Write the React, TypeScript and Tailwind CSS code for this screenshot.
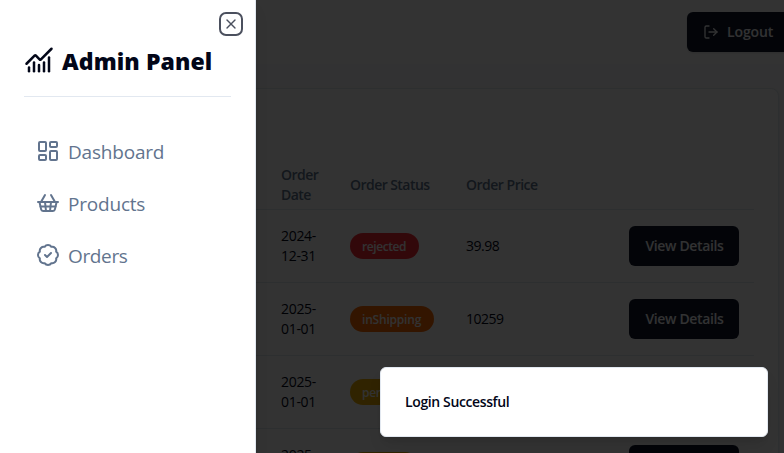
import { BadgeCheck, ChartNoAxesCombined, LayoutDashboard, LogOut, ShoppingBasket, X } from "lucide-react";

const orders = [
  { date: ["2024-", "12-31"], status: "rejected", color: "w-[69px] bg-red-500 tracking-[-0.42px]", price: "39.98" },
  { date: ["2025-", "01-01"], status: "inShipping", color: "w-[84px] bg-orange-500 tracking-[-0.2px]", price: "10259" },
  { date: ["2025-", "01-01"], status: "pending", color: "w-[68px] bg-yellow-500 tracking-[-0.3px]", price: "" },
  { date: ["2025-", "01-01"], status: "pending", color: "w-[68px] bg-yellow-500 tracking-[-0.3px]", price: "" },
];

const links = [
  { label: "Dashboard", Icon: LayoutDashboard, spacing: "tracking-[-0.2px]" },
  { label: "Products", Icon: ShoppingBasket, spacing: "tracking-[-0.2px]" },
  { label: "Orders", Icon: BadgeCheck, spacing: "tracking-[-0.35px]" },
];

const columns = "grid grid-cols-[69px_116px_163px_142px] items-center";

function OrdersPage() {
  return (
    <div className="h-full w-full bg-[#fafbfc]">
      <header className="flex h-16 items-center bg-white pl-[687px]">
        <button className="flex h-10 w-[110px] shrink-0 items-center gap-2 rounded-md bg-slate-900 px-4 text-sm font-semibold tracking-[-0.1px] text-slate-50 shadow">
          <LogOut className="size-4 shrink-0" />
          Logout
        </button>
      </header>
      <main className="pt-6 pr-[5px] pl-6">
        <section className="h-[600px] rounded-lg border border-slate-200 bg-white pt-[71px] pr-6 shadow-sm">
          <div className={`${columns} h-[50px] border-b border-slate-200 pl-[256px] text-sm leading-5 font-semibold tracking-[-0.55px] text-slate-500`}>
            <span className="w-10">Order Date</span>
            <span>Order Status</span>
            <span className="tracking-[-0.5px]">Order Price</span>
          </div>
          {orders.map((order, i) => (
            <div key={i} className={`${columns} h-[73px] border-b border-slate-200 pl-[256px] text-sm leading-5 text-slate-950`}>
              <span className="tracking-[-0.3px]">
                {order.date[0]}
                <br />
                {order.date[1]}
              </span>
              <span className="flex">
                <span className={`${order.color} inline-flex h-[26px] items-center rounded-full pt-px pl-3 text-xs font-semibold text-slate-50`}>
                  {order.status}
                </span>
              </span>
              <span className="tracking-[-0.5px]">{order.price}</span>
              <button className="h-10 w-[110px] rounded-md bg-slate-900 pl-px text-sm font-semibold tracking-[-0.35px] text-slate-50">
                View Details
              </button>
            </div>
          ))}
        </section>
      </main>
    </div>
  );
}

function Sidebar() {
  return (
    <aside className="absolute inset-y-0 left-0 w-64 border-r border-slate-200 bg-white px-6 pt-6 shadow-lg">
      <button className="absolute top-3 right-3 flex size-6 items-center justify-center rounded-[7px] border-2 border-[#4b505e] text-[#4b505e]">
        <X className="size-4 shrink-0" strokeWidth={2} />
      </button>
      <div className="flex h-[73px] w-[207px] items-center gap-2 border-b border-slate-200 text-slate-950">
        <ChartNoAxesCombined className="size-[30px] shrink-0" />
        <h1 className="pt-0.5 text-[23px] leading-8 font-extrabold tracking-[0.1px] whitespace-nowrap">Admin Panel</h1>
      </div>
      <nav className="mt-8 flex flex-col gap-2 px-3">
        {links.map(({ label, Icon, spacing }) => (
          <a key={label} className="flex h-11 items-center gap-2 text-[19px] leading-7 text-slate-500">
            <Icon className="size-6 shrink-0" />
            <span className={`${spacing} pt-0.5`}>{label}</span>
          </a>
        ))}
      </nav>
    </aside>
  );
}

export default function App() {
  return (
    <div className="relative h-[453px] w-[784px] overflow-hidden bg-white font-['Open_Sans','Noto_Sans',sans-serif]">
      <OrdersPage />
      <div className="absolute inset-0 bg-black/80" />
      <Sidebar />
      <div className="absolute right-4 bottom-4 flex h-[70px] w-[388px] items-center rounded-md border border-slate-200 bg-white px-6 text-sm font-semibold tracking-[-0.38px] text-slate-950 shadow-lg">
        Login Successful
      </div>
    </div>
  );
}
